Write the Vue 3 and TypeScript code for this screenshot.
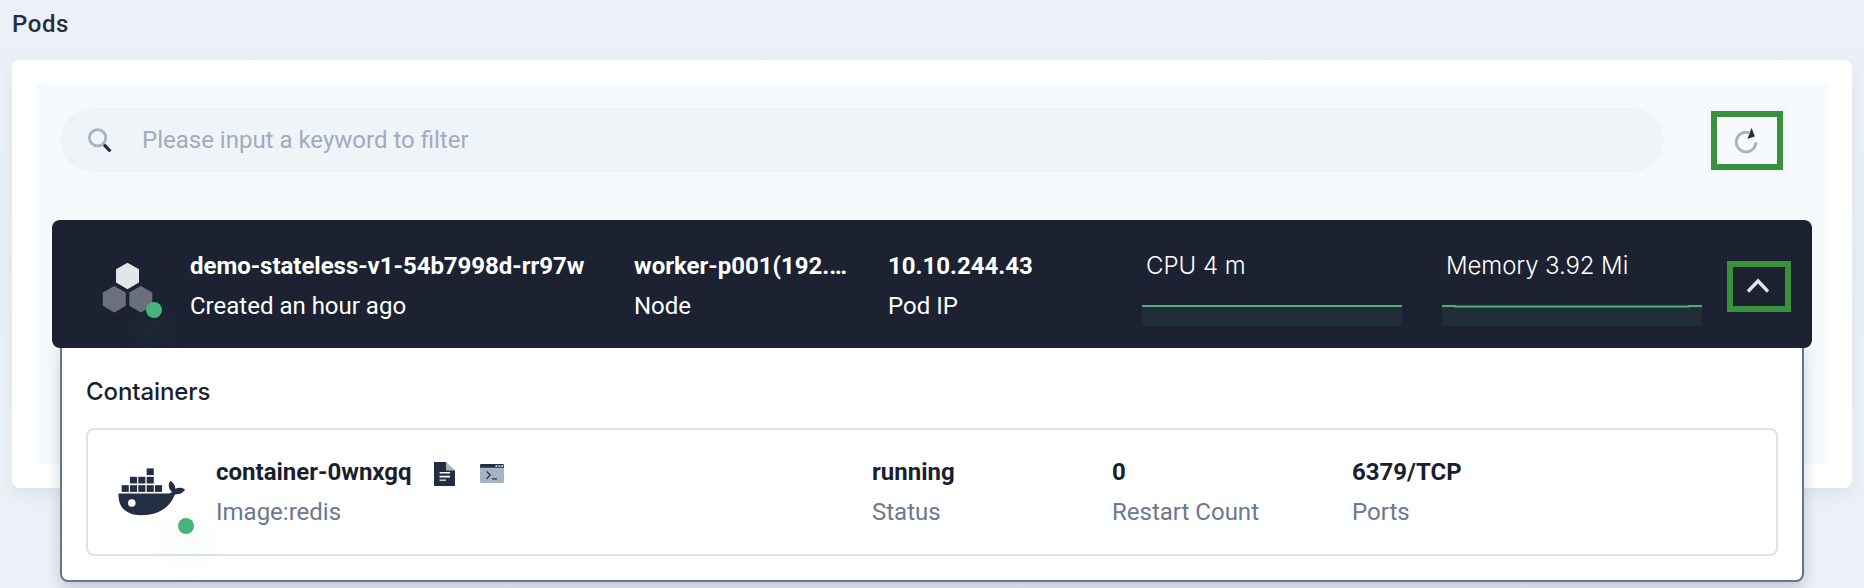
<script setup lang="ts">
interface Field {
  value: string
  label: string
}

interface Metric {
  title: string
  line: string
  flat: boolean
}

const podFields: Field[] = [
  { value: 'demo-stateless-v1-54b7998d-rr97w', label: 'Created an hour ago' },
  { value: 'worker-p001(192.…', label: 'Node' },
  { value: '10.10.244.43', label: 'Pod IP' },
]

const metrics: Metric[] = [
  { title: 'CPU 4 m', line: 'M0 2H260', flat: true },
  { title: 'Memory 3.92 Mi', line: 'M0 2H13V2.5H247V2H260', flat: false },
]

const containerFields: Field[] = [
  { value: 'running', label: 'Status' },
  { value: '0', label: 'Restart Count' },
  { value: '6379/TCP', label: 'Ports' },
]

const crates: [number, number][] = [
  [28.7, 0],
  [12, 8.4], [20.3, 8.4], [28.7, 8.4],
  [3.7, 16.8], [12, 16.8], [20.3, 16.8], [28.7, 16.8], [37, 16.8],
]
</script>

<template>
  <main class="page">
    <h2 class="title">Pods</h2>
    <section class="card">
      <div class="surface">
        <div class="toolbar">
          <label class="search">
            <svg class="search-icon" viewBox="0 0 24 24">
              <circle cx="9.6" cy="9.8" r="8.2" fill="none" stroke="#a4b4c2" stroke-width="2.8" />
              <path d="M16 16.6L22.4 23.4" stroke="#242e42" stroke-width="3.2" />
            </svg>
            <span class="placeholder">Please input a keyword to filter</span>
          </label>
          <button class="refresh" aria-label="Refresh">
            <svg width="24" height="26" viewBox="0 0 24 26">
              <path d="M14.2 4.8A9.8 9.8 0 1 0 20.9 14.3" fill="none" stroke="#a4b4c2" stroke-width="2.8" />
              <path d="M16.6 0L19.8 8.4L12.5 10.8Z" fill="#242e42" />
            </svg>
          </button>
        </div>

        <article class="pod">
          <header class="pod-head">
            <div class="pod-icon">
              <svg width="52" height="52" viewBox="0 0 52 52">
                <path d="M25.5.7L37 7.3V20.5L25.5 27.3L14 20.5V7.3Z" fill="#e4e5e8" />
                <path d="M12.3 24L23.8 30.6V43.8L12.3 50.6L.8 43.8V30.6Z" fill="#6b707c" />
                <path d="M38.8 24L50.3 30.6V43.8L38.8 50.6L27.3 43.8V30.6Z" fill="#6b707c" />
              </svg>
              <i class="dot"></i>
            </div>
            <div v-for="field in podFields" :key="field.label" class="field">
              <strong>{{ field.value }}</strong>
              <span>{{ field.label }}</span>
            </div>
            <div v-for="metric in metrics" :key="metric.title" class="metric">
              <div class="metric-title">{{ metric.title }}</div>
              <svg width="260" height="22" viewBox="0 0 260 22">
                <rect y="2" width="260" height="20" fill="#212e39" />
                <path :d="metric.line" fill="none" stroke="#49b27a" stroke-width="2" />
              </svg>
            </div>
            <button class="toggle" aria-label="Collapse">
              <svg width="24" height="16" viewBox="0 0 24 16">
                <path d="M2 13.5L12 3L22 13.5" fill="none" stroke="#e4e5e8" stroke-width="3.3" />
              </svg>
            </button>
          </header>

          <div class="panel">
            <h3 class="panel-title">Containers</h3>
            <div class="container">
              <div class="container-icon">
                <svg width="68" height="48" viewBox="0 0 68 48">
                  <g fill="#242e42">
                    <rect v-for="([x, y], i) in crates" :key="i" :x="x" :y="y + 0.4" width="7.1" height="6.7" />
                    <path d="M.5 25.5H49C51 25.5 52.8 25 54 24C50 20.5 50 16 52.4 12.8C55.7 15 57.4 17.5 57.3 20.8C60.5 19 64.2 19.4 67 21.3C65.4 25 61.8 26.5 57 26.4C51.2 40.8 39 47.2 23 47.2C8.5 47.2 0 39.5.5 25.5Z" />
                  </g>
                  <circle cx="13.8" cy="35" r="3.8" fill="#fff" />
                </svg>
                <i class="dot"></i>
              </div>
              <div class="container-main">
                <div class="name-row">
                  <strong>container-0wnxgq</strong>
                  <svg class="log-icon" width="21" height="24" viewBox="0 0 21 24">
                    <path d="M0 0H12.3V8.3H21V24H0Z" fill="#242e42" />
                    <path d="M12.3 0L21 8.3H12.3Z" fill="#a4b4c2" />
                    <path d="M5.6 10.8H16M5.6 14.6H16" stroke="#fff" stroke-width="1.6" />
                    <path d="M5.6 18.2H12" stroke="#c5ced8" stroke-width="1.6" />
                  </svg>
                  <svg class="term-icon" width="24" height="19" viewBox="0 0 24 19">
                    <path d="M0 3H24V17.6Q24 19 22.6 19H1.4Q0 19 0 17.6Z" fill="#a4b4c2" />
                    <path d="M0 3.7V1.3Q0 0 1.3 0H22.7Q24 0 24 1.3V3.7Z" fill="#242e42" />
                    <path d="M15.4 1.9H17.6M18.4 1.9H20.5M21.2 1.9H23.3" stroke="#a4b4c2" stroke-width="2" />
                    <path d="M6.6 7.3L10.2 11L6.6 14.8M12 14.9H17" fill="none" stroke="#242e42" stroke-width="1.2" />
                  </svg>
                </div>
                <span>Image:redis</span>
              </div>
              <div v-for="field in containerFields" :key="field.label" class="container-field">
                <strong>{{ field.value }}</strong>
                <span>{{ field.label }}</span>
              </div>
            </div>
          </div>
        </article>
      </div>
    </section>
  </main>
</template>

<style>
body {
  margin: 0;
  overflow: hidden;
}
</style>

<style scoped>
* {
  box-sizing: border-box;
}

.page {
  height: 588px;
  padding: 0 12px;
  overflow: hidden;
  background: linear-gradient(180deg, #ecf0f8 0%, #e8eff6 45%, #edf1f8 100%);
  color: #181f2f;
  font: 24px/40px Roboto, "Noto Sans", sans-serif;
}

h2,
h3 {
  margin: 0;
  font-size: 24px;
  font-weight: 500;
}

strong {
  font-weight: 700;
}

button {
  padding: 0;
  background: none;
  border: 6px solid #38913b;
  display: flex;
  align-items: center;
  justify-content: center;
}

svg {
  display: block;
  flex: none;
}

.title {
  height: 60px;
  padding-top: 4px;
  color: #242e42;
  letter-spacing: 0.6px;
}

.card {
  height: 428px;
  padding: 24px;
  border-radius: 8px;
  background: #fff;
  box-shadow: 0 8px 16px rgba(36, 46, 66, 0.06);
}

.surface {
  height: 380px;
  padding: 24px 16px 0;
  background: #f6fafd;
}

.toolbar {
  display: flex;
  height: 112px;
  padding-left: 8px;
}

.search {
  display: flex;
  align-items: center;
  width: 1604px;
  height: 64px;
  padding-left: 28px;
  border-radius: 32px;
  background: #eff4f9;
}

.search-icon {
  width: 24px;
  height: 24px;
}

.placeholder {
  margin-left: 30px;
  color: #a0abbe;
}

.refresh {
  width: 72px;
  height: 59px;
  margin: 3px 0 0 47px;
  box-shadow: 0 0 0 4px #f3f6f9;
}

.refresh svg {
  margin-right: 1px;
}

.pod-head {
  position: relative;
  z-index: 1;
  display: flex;
  height: 128px;
  padding: 26px 0 0 50px;
  border-radius: 8px;
  background: #1c2232;
  color: #fff;
}

.pod-icon {
  position: relative;
  width: 52px;
  height: 52px;
  margin: 16px 36px 0 0;
}

.dot {
  position: absolute;
  width: 16px;
  height: 16px;
  border-radius: 50%;
  background: #49b27a;
  box-shadow: 0 16px 32px rgba(73, 178, 122, 0.25);
}

.pod-icon .dot {
  left: 43.5px;
  top: 39.5px;
}

.field {
  display: flex;
  flex-direction: column;
  width: 214px;
  margin-right: 40px;
  white-space: nowrap;
}

.field:nth-child(2) {
  width: 404px;
}

.field:nth-child(2) strong {
  letter-spacing: -0.03px;
}

.metric {
  width: 260px;
  margin-right: 40px;
}

.metric-title {
  height: 58px;
  padding-left: 4px;
  font-family: Inter, sans-serif;
  font-weight: 300;
}

.metric:nth-child(6) .metric-title {
  letter-spacing: -0.1px;
}

.toggle {
  width: 64px;
  height: 51px;
  margin: 15px 0 0 -15px;
}

.toggle svg {
  margin: 0 2px 1px 0;
}

.panel {
  height: 242px;
  margin: -8px 8px 0;
  padding: 30px 24px 0;
  border: 2px solid #67758d;
  border-radius: 8px;
  background: #fff;
  box-shadow: 0 8px 16px rgba(36, 46, 66, 0.2);
}

.panel-title {
  height: 56px;
  font-family: Inter, sans-serif;
  letter-spacing: -0.1px;
}

.container {
  display: flex;
  height: 128px;
  padding: 22px 0 0 30px;
  border: 2px solid #dbe2ea;
  border-radius: 8px;
}

.container-icon {
  position: relative;
  width: 68px;
  height: 48px;
  margin: 16px 30px 0 0;
}

.container-icon .dot {
  left: 59.7px;
  top: 50px;
}

.container-main {
  width: 656px;
}

.container-main span,
.container-field span {
  color: #6a7890;
}

.name-row {
  display: flex;
}

.log-icon {
  margin: 10px 0 0 22px;
}

.term-icon {
  margin: 12px 0 0 25px;
}

.container-field {
  display: flex;
  flex-direction: column;
  width: 240px;
}
</style>
